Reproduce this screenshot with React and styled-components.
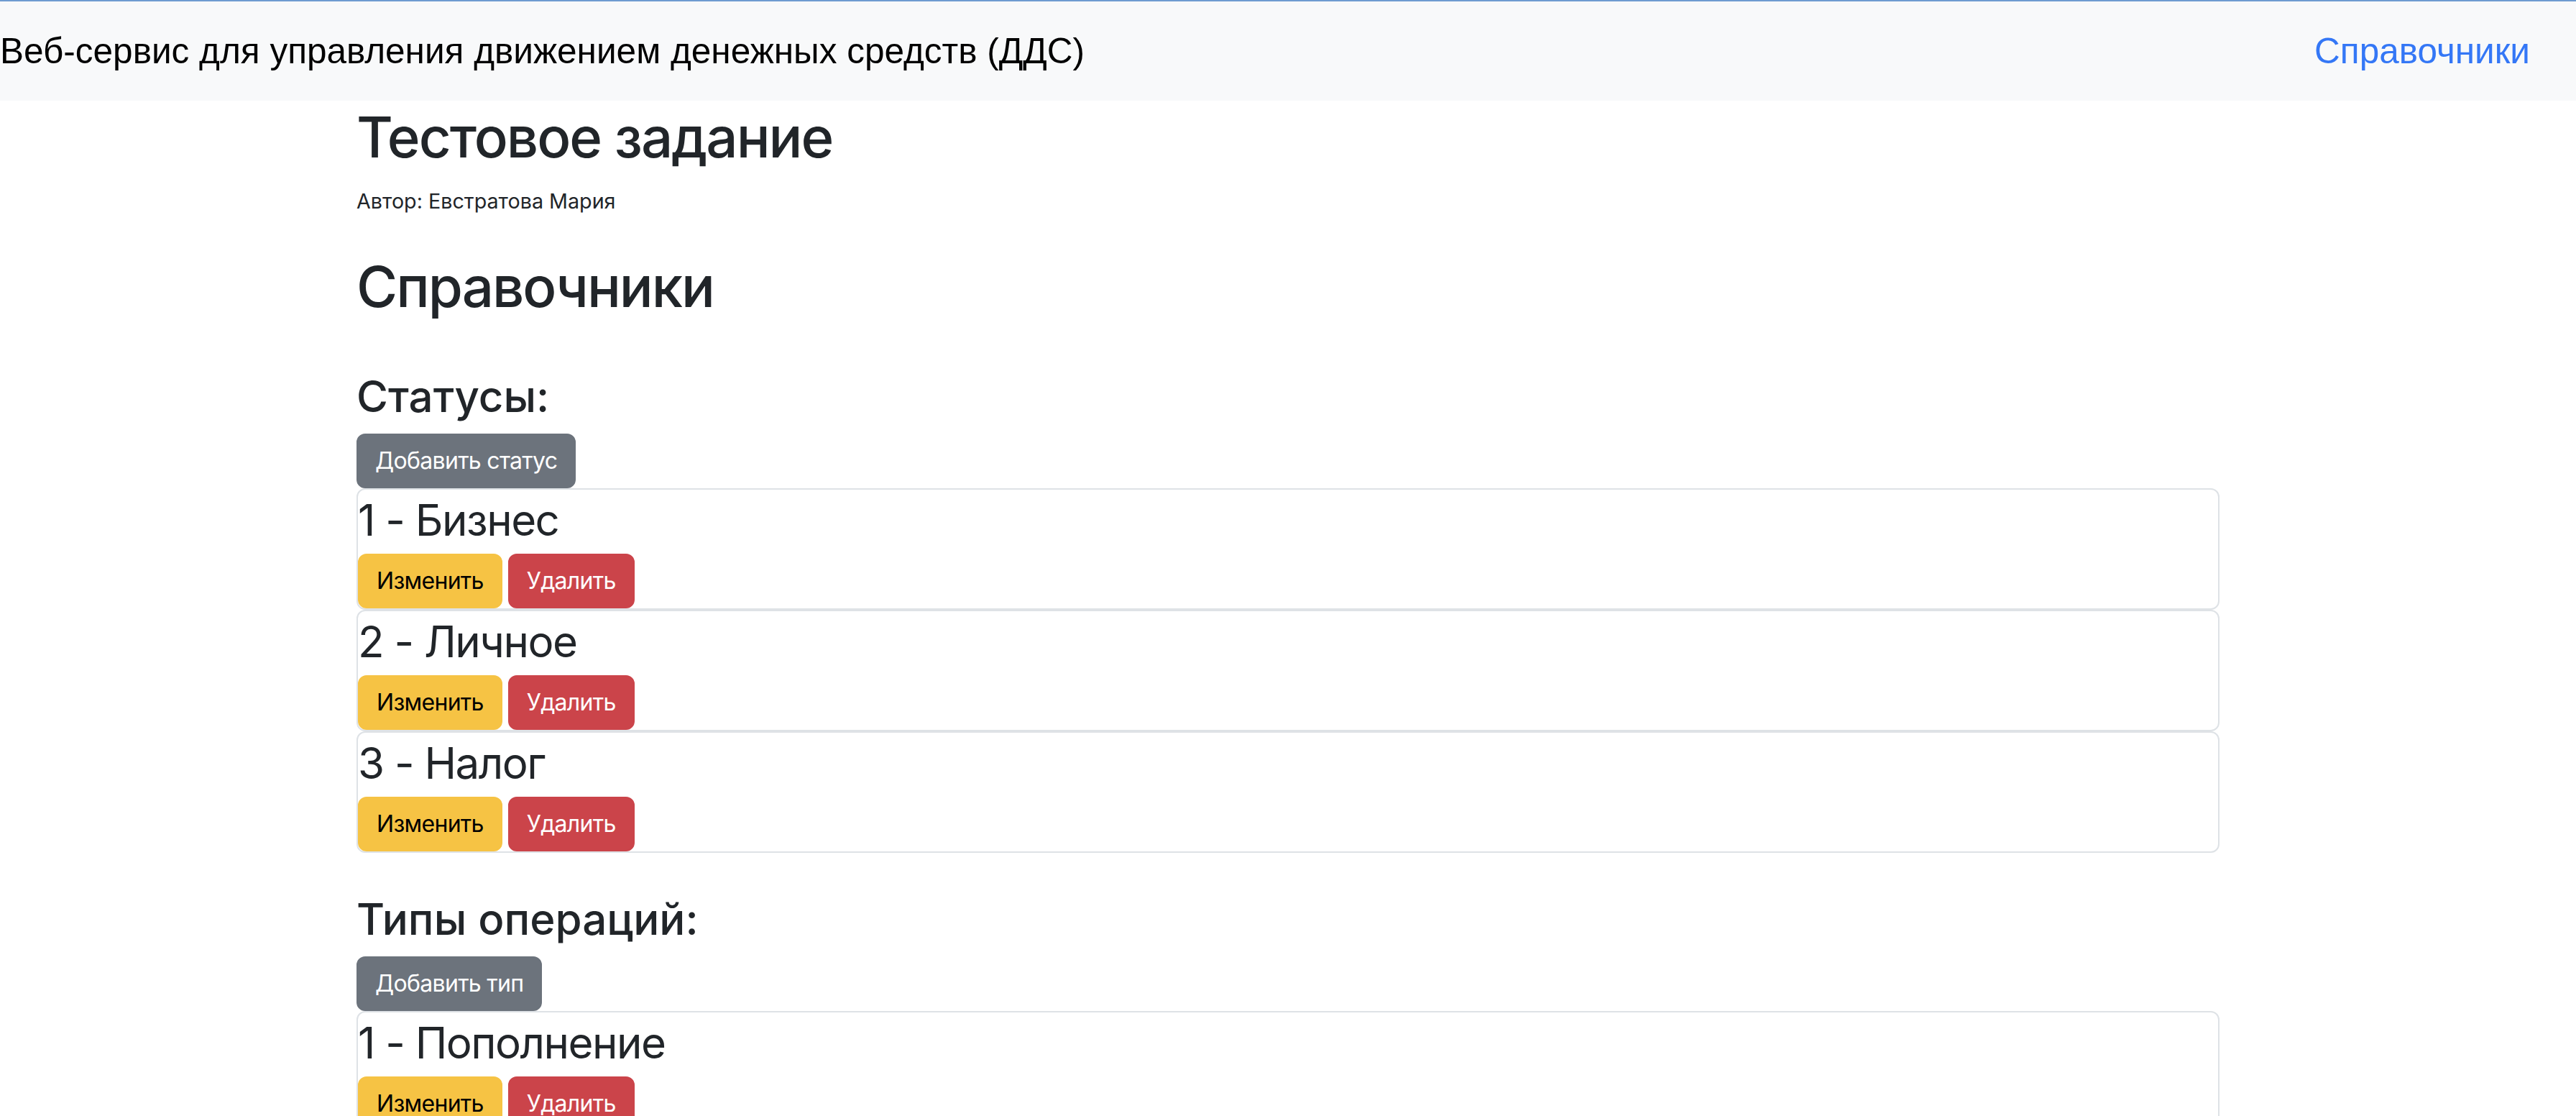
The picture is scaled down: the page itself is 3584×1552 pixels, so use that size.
import styled, { createGlobalStyle } from 'styled-components';

const GlobalStyle = createGlobalStyle`
	* {
		box-sizing: border-box;
	}
	body {
		margin: 0;
		background: #ffffff;
		color: #212529;
		font-family: Inter, 'Noto Sans', sans-serif;
		font-size: 32px;
		line-height: 1.5;
	}
`;

const Navbar = styled.nav`
	display: flex;
	align-items: center;
	justify-content: space-between;
	height: 140px;
	padding: 0 64px 0 0;
	background: #f8f9fa;
	border-top: 2px solid #6f9bd0;
	font-family: 'Liberation Sans', Arial, sans-serif;
	font-size: 49.5px;
`;

const Brand = styled.span`
	color: #000000;
`;

const NavLink = styled.a`
	color: #3477f6;
	text-decoration: none;
`;

const Container = styled.main`
	max-width: 2640px;
	margin: 0 auto;
	padding: 0 24px;
`;

const Title = styled.h1`
	margin: ${(props) => props.top || 0}px 0 ${(props) => props.bottom || 16}px;
	font-size: 78px;
	font-weight: 500;
	line-height: 96px;
	letter-spacing: -2px;
`;

const Author = styled.p`
	margin: 0 0 32px;
	small {
		font-size: 28.7px;
	}
`;

const SectionTitle = styled.h2`
	margin: 56px 0 16px;
	font-size: 60px;
	font-weight: 500;
	line-height: 72px;
`;

const Button = styled.button`
	display: inline-block;
	padding: 12px 24px;
	border: 2px solid ${(props) => props.bg};
	border-radius: 12px;
	background: ${(props) => props.bg};
	color: ${(props) => props.color || '#ffffff'};
	font-family: inherit;
	font-size: 32px;
	line-height: 48px;
	letter-spacing: -0.7px;
	cursor: pointer;
`;

const Card = styled.div`
	border: 2px solid #dee2e6;
	border-radius: 12px;
	background: #ffffff;
`;

const ItemTitle = styled.h3`
	margin: 0 0 11px;
	padding-top: 6px;
	font-size: 60px;
	font-weight: 400;
	line-height: 72px;
	letter-spacing: -1.5px;
`;

const Actions = styled.div`
	display: flex;
	gap: 8px;
`;

const statuses = [
	{ id: 1, name: 'Бизнес' },
	{ id: 2, name: 'Личное' },
	{ id: 3, name: 'Налог' },
];

const types = [
	{ id: 1, name: 'Пополнение' },
	{ id: 2, name: 'Списание' },
];

const Item = ({ item }) => (
	<Card>
		<ItemTitle>
			{item.id} - {item.name}
		</ItemTitle>
		<Actions>
			<Button bg='#f6c344' color='#000000'>Изменить</Button>
			<Button bg='#cb444a'>Удалить</Button>
		</Actions>
	</Card>
);

const Section = ({ title, addLabel, items }) => (
	<section>
		<SectionTitle>{title}</SectionTitle>
		<Button bg='#6c737c'>{addLabel}</Button>
		{items.map((item) => <Item key={item.id} item={item} />)}
	</section>
);

const App = () => (
	<>
		<GlobalStyle />
		<Navbar>
			<Brand>Веб-сервис для управления движением денежных средств (ДДС)</Brand>
			<NavLink href='#'>Справочники</NavLink>
		</Navbar>
		<Container>
			<Title top={3}>Тестовое задание</Title>
			<Author>
				<small>Автор: Евстратова Мария</small>
			</Author>
			<Title top={48} bottom={68}>Справочники</Title>
			<Section title='Статусы:' addLabel='Добавить статус' items={statuses} />
			<Section title='Типы операций:' addLabel='Добавить тип' items={types} />
		</Container>
	</>
);

export default App;
